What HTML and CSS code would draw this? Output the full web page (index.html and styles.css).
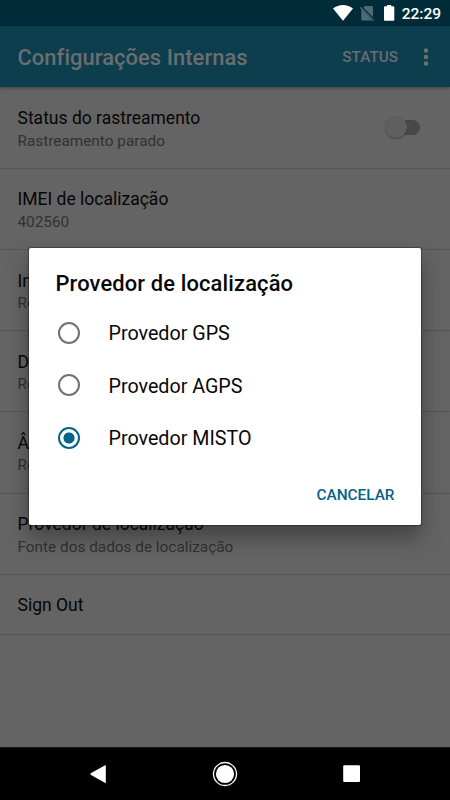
FILE: index.html
```html
<!DOCTYPE html>
<html lang="pt-BR">
<head>
<meta charset="utf-8">
<title>Configurações Internas</title>
<link rel="stylesheet" href="styles.css">
</head>
<body>
<div class="screen">
  <div class="statusbar">
    <svg class="sys-icons" width="66" height="26" viewBox="0 0 66 26">
      <path fill="#fff" d="M0 8.6C5.8 3.8 14.200 3.800 20 8.600L10 20.700Z"/>
      <path fill="#4d6b75" d="M31.800 6H38.700Q40 6 40 7.300V17.200L30.200 7.600ZM28.300 9L39.200 20.400H29.600Q28.300 20.400 28.300 19.100Z"/>
      <path stroke="#4d6b75" stroke-width="1.200" fill="none" d="M27.200 7.300L40.700 20.700"/>
      <path fill="#fff" d="M54 5H58.200V6.300H60.300Q61.300 6.300 61.300 7.300V19.700Q61.300 20.700 60.300 20.700H52Q51 20.700 51 19.700V7.300Q51 6.300 52 6.300H54Z"/>
    </svg>
    <span class="clock">22:29</span>
  </div>
  <header class="appbar">
    <h1 class="appbar-title">Configurações Internas</h1>
    <span class="appbar-action">STATUS</span>
    <svg class="more" width="6" height="20" viewBox="0 0 6 20" fill="#6d7070"><circle cx="3" cy="3.500" r="2.250"/><circle cx="3" cy="10" r="2.250"/><circle cx="3" cy="16.500" r="2.250"/></svg>
  </header>
  <main class="settings">
    <section class="row">
      <div><div class="name">Status do rastreamento</div><div class="note">Rastreamento parado</div></div>
      <span class="switch"></span>
    </section>
    <section class="row"><div><div class="name">IMEI de localização</div><div class="note">402560</div></div></section>
    <section class="row"><div><div class="name">In</div><div class="note">Re</div></div></section>
    <section class="row"><div><div class="name">D</div><div class="note">Re</div></div></section>
    <section class="row"><div><div class="name">Â</div><div class="note">Re</div></div></section>
    <section class="row"><div><div class="name">Provedor de localização</div><div class="note">Fonte dos dados de localização</div></div></section>
    <section class="row row-single"><div class="name">Sign Out</div></section>
  </main>
  <nav class="navbar">
    <svg width="450" height="53" viewBox="0 0 450 53">
      <path fill="#fff" d="M105.800 17.800V34.700Q105.800 35.300 105.200 34.900L90.700 26.700Q90 26 90.700 25.300L105.200 17.200Q105.800 17 105.800 17.800Z"/>
      <circle cx="225" cy="26" r="11.500" fill="none" stroke="#fff" stroke-width="1.300"/>
      <circle cx="225" cy="26" r="9.100" fill="#fff"/>
      <rect x="343.200" y="17.300" width="16.800" height="16.800" rx="1" fill="#fff"/>
    </svg>
  </nav>
  <div class="dialog" role="dialog">
    <h2 class="dialog-title">Provedor de localização</h2>
    <div class="option"><span class="radio"></span><span class="label">Provedor GPS</span></div>
    <div class="option"><span class="radio"></span><span class="label">Provedor AGPS</span></div>
    <div class="option"><span class="radio checked"></span><span class="label">Provedor MISTO</span></div>
    <div class="actions">CANCELAR</div>
  </div>
</div>
</body>
</html>
```
FILE: styles.css
```css
* { box-sizing: border-box; }
body { margin: 0; font-family: Roboto, sans-serif; }
.screen {
  position: relative;
  width: 450px;
  height: 800px;
  overflow: hidden;
  display: flex;
  flex-direction: column;
  background: #646464;
}
.statusbar {
  height: 26px;
  flex: none;
  display: flex;
  justify-content: flex-end;
  align-items: center;
  padding-right: 9px;
  background: #002b39;
}
.sys-icons { margin-right: 3px; }
.clock { color: #fff; font-size: 15.5px; font-weight: 500; line-height: 26px; padding-top: 2px; }
.appbar {
  height: 61px;
  flex: none;
  display: flex;
  align-items: center;
  padding: 1px 21px 0 17.5px;
  background: #0c3e4e;
  box-shadow: 0 1px 3px rgba(0, 0, 0, .35);
}
.appbar-title { margin: 0; flex: 1; font-size: 21.9px; font-weight: 500; letter-spacing: .07px; font-variant-ligatures: common-ligatures; color: #6b6e6f; white-space: nowrap; }
.appbar-action { font-size: 15.3px; font-weight: 500; color: #696d6f; margin-right: 25px; }
.settings { flex: 1; padding-top: .6px; }
.row {
  height: 81.2px;
  display: flex;
  justify-content: space-between;
  padding: 19.600px 30px 0 17.5px;
  border-bottom: 1px solid #565656;
}
.row-single { height: 60.2px; }
.name { font-size: 17.5px; line-height: 22px; color: #060606; white-space: nowrap; }
.note { font-size: 15.35px; line-height: 21px; margin-top: 1.400px; color: #313131; white-space: nowrap; }
.switch {
  position: relative;
  width: 26px;
  height: 15px;
  margin-top: 13px;
  border-radius: 8px;
  background: #474747;
}
.switch::before {
  content: "";
  position: absolute;
  left: -9px;
  top: -4px;
  width: 22px;
  height: 22px;
  border-radius: 50%;
  background: #5f5f5f;
  box-shadow: 0 1px 1px rgba(0, 0, 0, .3);
}
.navbar { height: 53px; flex: none; background: #000; border-top: 1px solid #1a1a1a; }
.navbar svg { display: block; }
.dialog {
  position: absolute;
  left: 29px;
  top: 248px;
  width: 392px;
  height: 277.4px;
  padding: 22px 26.5px 0;
  border-radius: 2px;
  background: #fff;
  box-shadow: 0 0 1px 1px rgba(0, 0, 0, .3), 0 12px 22px rgba(0, 0, 0, .35);
}
.dialog-title { margin: 0 0 9.400px; font-size: 21.9px; line-height: 27px; font-weight: 500; letter-spacing: .14px; color: #080808; white-space: nowrap; }
.option { height: 52.5px; display: flex; align-items: center; font-size: 19.7px; color: #080808; white-space: nowrap; }
.label { padding-top: 2px; }
.radio {
  width: 22px;
  height: 22px;
  flex: none;
  margin: 0 29px 0 2px;
  border: 2px solid #727272;
  border-radius: 50%;
}
.radio.checked { border-color: #04658a; background: radial-gradient(circle, #04658a 5.2px, #fff 5.9px); }
.actions { margin-top: 20px; text-align: right; font-size: 15.35px; line-height: 22px; font-weight: 500; color: #04618a; }
```
